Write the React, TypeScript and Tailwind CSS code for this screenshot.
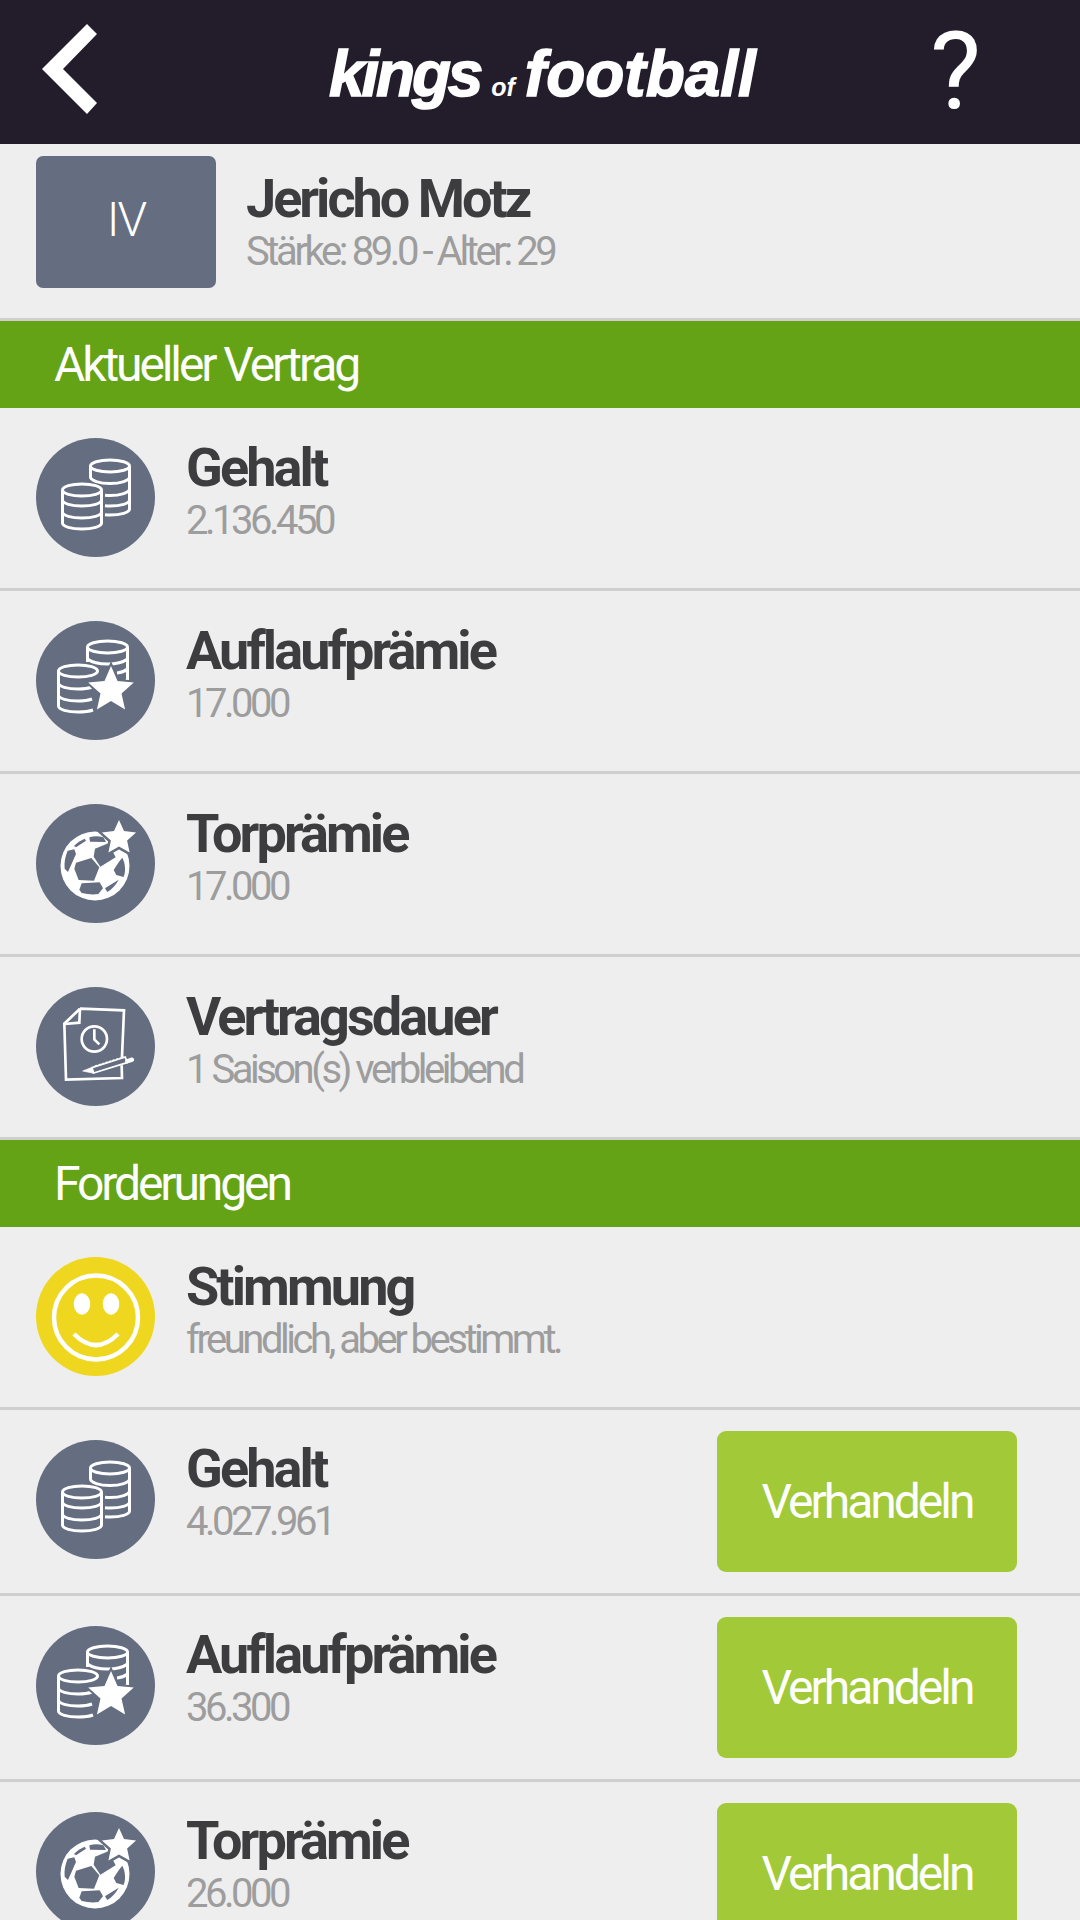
import React from 'react';

const Coins = () => (
  <svg viewBox="0 0 118 118" className="w-[118px] h-[118px]" fill="none" stroke="#fff" strokeWidth="3">
    <ellipse cx="73" cy="28" rx="19.5" ry="6" />
    <path d="M53.5 28v11c0 3.5 9 6.5 19.5 6.5s19.5-3 19.5-6.5V28M92.5 39v12c0 3.5-9 6.5-19.5 6.5-2 0-3-.1-5-.3M92.5 51v11c0 3.5-9 6-19.5 6-2 0-3-.1-5-.3M92.5 62v9c0 3.5-9 6-19.5 6-2 0-3-.1-5-.3" />
    <path d="M25.5 52c0-3.5 9-6 19.5-6s19.5 2.5 19.5 6-9 6-19.5 6-19.5-2.5-19.5-6z" fill="#646e80" />
    <path d="M25.5 52v33c0 3.5 9 6 19.5 6s19.5-2.5 19.5-6V52M25.5 62c0 3.5 9 6 19.5 6s19.5-2.5 19.5-6M25.5 74c0 3.5 9 6 19.5 6s19.5-2.5 19.5-6" />
  </svg>
);

const CoinsStar = () => (
  <svg viewBox="0 0 118 118" className="w-[118px] h-[118px]" fill="none" stroke="#fff" strokeWidth="3">
    <ellipse cx="70.5" cy="26" rx="20" ry="6" />
    <path d="M50.5 26v15M90.5 26v33M50.5 38c4 3 12 5 20 5s16-2 20-5M80 52c5-.5 8-2 10.5-4M84 62c3-.5 5-1.5 6.5-3" />
    <path d="M21.5 50c0-3.5 9-6 19.5-6s19.5 2.5 19.5 6-9 6-19.5 6-19.5-2.5-19.5-6z" fill="#646e80" />
    <path d="M21.5 50v35c0 3.5 9 6 19.5 6 6 0 11-.5 15-2M21.5 62c0 3.5 9 6 19.5 6 5 0 10-.5 14-2M21.5 74c0 3.5 9 6 19.5 6 5 0 10-.5 14-2" />
    <path d="M74 45L80.5 60.1 96.8 61.6 84.5 72.4 88.1 88.4 74 80 59.9 88.4 63.5 72.4 51.2 61.6 67.5 60.1Z" fill="#fff" stroke="#646e80" strokeWidth="4" paintOrder="stroke" />
  </svg>
);

const BallStar = () => (
  <svg viewBox="0 0 118 118" className="w-[118px] h-[118px]">
    <circle cx="58" cy="62" r="34.5" fill="#fff" />
    <g transform="translate(13 16) scale(.3333)" fill="#646e80">
      <path d="M78 128l46-14 24 28-16 40-46-2-13-34z" />
      <path d="M53 92l20-4 5 14-24 54-10-10c-2-20 2-38 9-54z" />
      <path d="M72 78c9-10 20-17 32-22l4 6-30 20z" />
      <path d="M118 52c14-4 28-4 42 0l8 14-48-1z" />
      <path d="M95 190l54-3 10 18-14 17c-16 3-32 1-50-3l-7-10z" />
      <path d="M207 125l10-12c9 18 11 38 4 58l-22-6-8-15z" />
      <path d="M165 205l41-26c-8 16-20 28-34 37z" />
      <path d="M135 86l40-16 22 42-46 28-20-30z" />
    </g>
    <path d="M82 16L87 27.1 99.1 28.4 90.1 36.6 92.6 48.6 82 42.5 71.4 48.6 73.9 36.6 64.9 28.4 77 27.1Z" fill="#fff" stroke="#646e80" strokeWidth="5" paintOrder="stroke" />
  </svg>
);

const ContractIcon = () => (
  <svg viewBox="0 0 118 118" className="w-[118px] h-[118px]" fill="none">
    <g transform="translate(13 13) scale(.3333)" stroke="#fff" strokeWidth="8">
      <path d="M90 26l132 5-6 140M215 196l1 38-168 5-5-168 47-45" />
      <path d="M90 26l-2 42-44 4" />
      <circle cx="133" cy="117" r="38" />
      <path d="M133 88v30l15 15" />
      <path d="M126 203l100-32 5 17-100 31z" strokeWidth="5" />
      <path d="M98 213l28-11 5 18z" fill="#fff" strokeWidth="2" />
      <path d="M135 198l86-27" strokeWidth="4" strokeDasharray="7 4" />
      <path d="M232 184l14-5" strokeWidth="13" strokeLinecap="round" />
    </g>
  </svg>
);

const Smiley = () => (
  <svg viewBox="0 0 118 118" className="w-[118px] h-[118px]" fill="none">
    <circle cx="59" cy="60.5" r="42" stroke="#fff" strokeWidth="4.5" />
    <ellipse cx="45" cy="47" rx="8.3" ry="10.7" fill="#fff" />
    <ellipse cx="74" cy="47" rx="8.3" ry="10.7" fill="#fff" />
    <path d="M37 77Q59 99 81 77" stroke="#fff" strokeWidth="4.5" />
  </svg>
);

type RowProps = {
  icon: React.ReactNode;
  title: string;
  sub: string;
  yellow?: boolean;
  action?: boolean;
};

const Row = ({ icon, title, sub, yellow, action }: RowProps) => (
  <div className={`flex items-center border-b-[3px] border-[#cfcfcf] pl-[36px] pr-[63px] ${action ? 'h-[186px]' : 'h-[183px]'}`}>
    <div className={`w-[119px] h-[119px] shrink-0 rounded-full flex items-center justify-center ${action ? '-mt-[5px]' : '-mt-[2px]'} ${yellow ? 'bg-[#efd71f]' : 'bg-[#646e80]'}`}>
      {icon}
    </div>
    <div className={`ml-[31px] flex-1 flex flex-col ${action ? 'mb-[17px]' : 'mb-[12px]'}`}>
      <div className="text-[54px] leading-[58px] font-bold text-[#3d3d3f] tracking-[-2.9px]">{title}</div>
      <div className="text-[40px] leading-[48px] text-[#9d9d9d] tracking-[-3.5px]">{sub}</div>
    </div>
    {action && (
      <div className="w-[300px] h-[141px] rounded-[9px] bg-[#a1c938] flex items-center justify-center text-white text-[48px] tracking-[-3px]">
        Verhandeln
      </div>
    )}
  </div>
);

const SectionHead = ({ label }: { label: string }) => (
  <div className="h-[87px] bg-[#64a315] flex items-center pl-[54px] text-white text-[48px] tracking-[-3.1px]">{label}</div>
);

export default function App() {
  return (
    <div className="w-[1080px] h-[1920px] overflow-hidden bg-[#eeeeee] font-[Roboto,sans-serif]">
      <header className="h-[144px] bg-[#231c2b] flex items-center justify-between pl-[40px] pr-[99px]">
        <svg viewBox="0 0 60 92" className="w-[60px] h-[92px] -mt-[4px]">
          <path d="M47 0l10 10-34 35 34 34-10 11L2 45z" fill="#fff" />
        </svg>
        <div className="flex items-baseline text-white font-['Liberation_Sans',sans-serif] font-bold italic text-[64px] [-webkit-text-stroke:1.5px_white] mt-[3px] ml-[55px]">
          <span className="tracking-[-3.2px]">kings</span>
          <span className="text-[25px] tracking-normal ml-[11px] mr-[10px] [-webkit-text-stroke:0px_white]">of</span>
          <span className="tracking-[0px]">football</span>
        </div>
        <div className="text-white text-[108px] leading-none -mt-[3px]">?</div>
      </header>

      <div className="h-[177px] border-b-[3px] border-[#cfcfcf] flex items-center pl-[36px]">
        <div className="w-[180px] h-[132px] -mt-[18px] rounded-[7px] bg-[#646e80] flex items-center justify-center text-white text-[48px] font-light tracking-[-2px] pb-[4px]">IV</div>
        <div className="ml-[30px] -mt-[17px] flex flex-col">
          <div className="text-[54px] leading-[58px] font-bold text-[#3d3d3f] tracking-[-3px]">Jericho Motz</div>
          <div className="text-[40px] leading-[48px] text-[#9d9d9d] tracking-[-3.4px]">Stärke: 89.0 - Alter: 29</div>
        </div>
      </div>

      <SectionHead label="Aktueller Vertrag" />
      <Row icon={<Coins />} title="Gehalt" sub="2.136.450" />
      <Row icon={<CoinsStar />} title="Auflaufprämie" sub="17.000" />
      <Row icon={<BallStar />} title="Torprämie" sub="17.000" />
      <Row icon={<ContractIcon />} title="Vertragsdauer" sub="1 Saison(s) verbleibend" />

      <SectionHead label="Forderungen" />
      <Row icon={<Smiley />} yellow title="Stimmung" sub="freundlich, aber bestimmt." />
      <Row icon={<Coins />} title="Gehalt" sub="4.027.961" action />
      <Row icon={<CoinsStar />} title="Auflaufprämie" sub="36.300" action />
      <Row icon={<BallStar />} title="Torprämie" sub="26.000" action />
    </div>
  );
}
